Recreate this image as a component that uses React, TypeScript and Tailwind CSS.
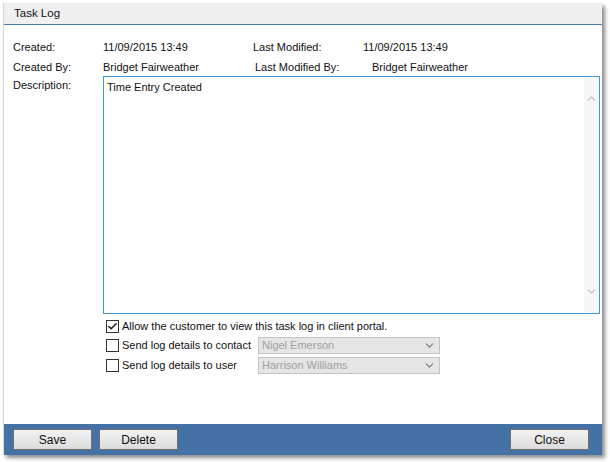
import { Check, ChevronDown, ChevronUp } from 'lucide-react';

const font = { fontFamily: '"Liberation Sans", Arial, sans-serif' };

const Select = ({ value }: { value: string }) => (
    <div className="flex h-[17px] w-[182px] items-center justify-between border border-[#c4c4c4] bg-[#e5e5e5] pl-[3px] pr-[3px] text-[#a0a0a0]">
        <span>{value}</span>
        <ChevronDown className="h-[13px] w-[13px] text-[#7a7a7a]" strokeWidth={2} />
    </div>
);

const CheckBox = ({ checked }: { checked?: boolean }) => (
    <div className="flex h-[13px] w-[13px] shrink-0 items-center justify-center border border-[#333] bg-white">
        {checked && <Check className="h-[11px] w-[11px] text-[#222]" strokeWidth={3.5} />}
    </div>
);

const Btn = ({ label }: { label: string }) => (
    <button className="h-[21px] w-[79px] border border-[#707070] bg-gradient-to-b from-[#f2f2f2] to-[#dcdcdc] text-[12px] text-[#111]">
        {label}
    </button>
);

export default function App() {
    return (
        <div className="h-[462px] w-[610px] bg-white pl-[3px] pt-[3px] text-[11px] text-[#111]" style={font}>
            <div className="flex h-[452px] w-[599px] flex-col border-l border-[#d8d8d8] bg-white shadow-[3px_3px_4px_rgba(0,0,0,0.45)]">
                {/* titre */}
                <div className="flex h-[22px] items-center border-b border-[#4a7bb5] bg-[#f0f0f0] pl-[10px] text-[11.5px]">Task Log</div>

                <div className="flex flex-1 flex-col pl-[9px] pt-[13px]">
                    <div className="flex h-[18px] items-center whitespace-nowrap">
                        <span className="w-[90px]">Created:</span>
                        <span className="w-[150px]">11/09/2015 13:49</span>
                        <span className="w-[110px]">Last Modified:</span>
                        <span>11/09/2015 13:49</span>
                    </div>
                    <div className="mt-[2px] flex h-[18px] items-center whitespace-nowrap">
                        <span className="w-[90px]">Created By:</span>
                        <span className="w-[152px]">Bridget Fairweather</span>
                        <span className="w-[117px]">Last Modified By:</span>
                        <span>Bridget Fairweather</span>
                    </div>
                    <div className="flex">
                        <span className="w-[90px] pt-[1px]">Description:</span>
                        <div className="flex flex-col whitespace-nowrap">
                            <div className="flex h-[238px] w-[497px] border border-[#3c9ad8] bg-white">
                                <div className="flex-1 pl-[3px] pt-[2px]">Time Entry Created</div>
                                <div className="flex w-[15px] flex-col items-center justify-between bg-[#f7f7f7] pt-[15px] pb-[15px]">
                                    <ChevronUp className="h-[13px] w-[13px] text-[#c2c2c2]" strokeWidth={2.5} />
                                    <ChevronDown className="h-[13px] w-[13px] text-[#c2c2c2]" strokeWidth={2.5} />
                                </div>
                            </div>
                            <div className="mt-[5px] flex h-[15px] items-center gap-[3px] pl-[3px]">
                                <CheckBox checked />
                                <span>Allow the customer to view this task log in client portal.</span>
                            </div>
                            <div className="mt-[2px] flex h-[18px] items-center pl-[3px]">
                                <CheckBox />
                                <span className="ml-[3px] w-[136px]">Send log details to contact</span>
                                <Select value="Nigel Emerson" />
                            </div>
                            <div className="mt-[2px] flex h-[18px] items-center pl-[3px]">
                                <CheckBox />
                                <span className="ml-[3px] w-[136px]">Send log details to user</span>
                                <Select value="Harrison Williams" />
                            </div>
                        </div>
                    </div>
                </div>

                {/* barre du bas */}
                <div className="flex h-[31px] items-center justify-between bg-[#4471a6] pl-[9px] pr-[13px]">
                    <div className="flex gap-[7px]">
                        <Btn label="Save" />
                        <Btn label="Delete" />
                    </div>
                    <Btn label="Close" />
                </div>
            </div>
        </div>
    );
}
